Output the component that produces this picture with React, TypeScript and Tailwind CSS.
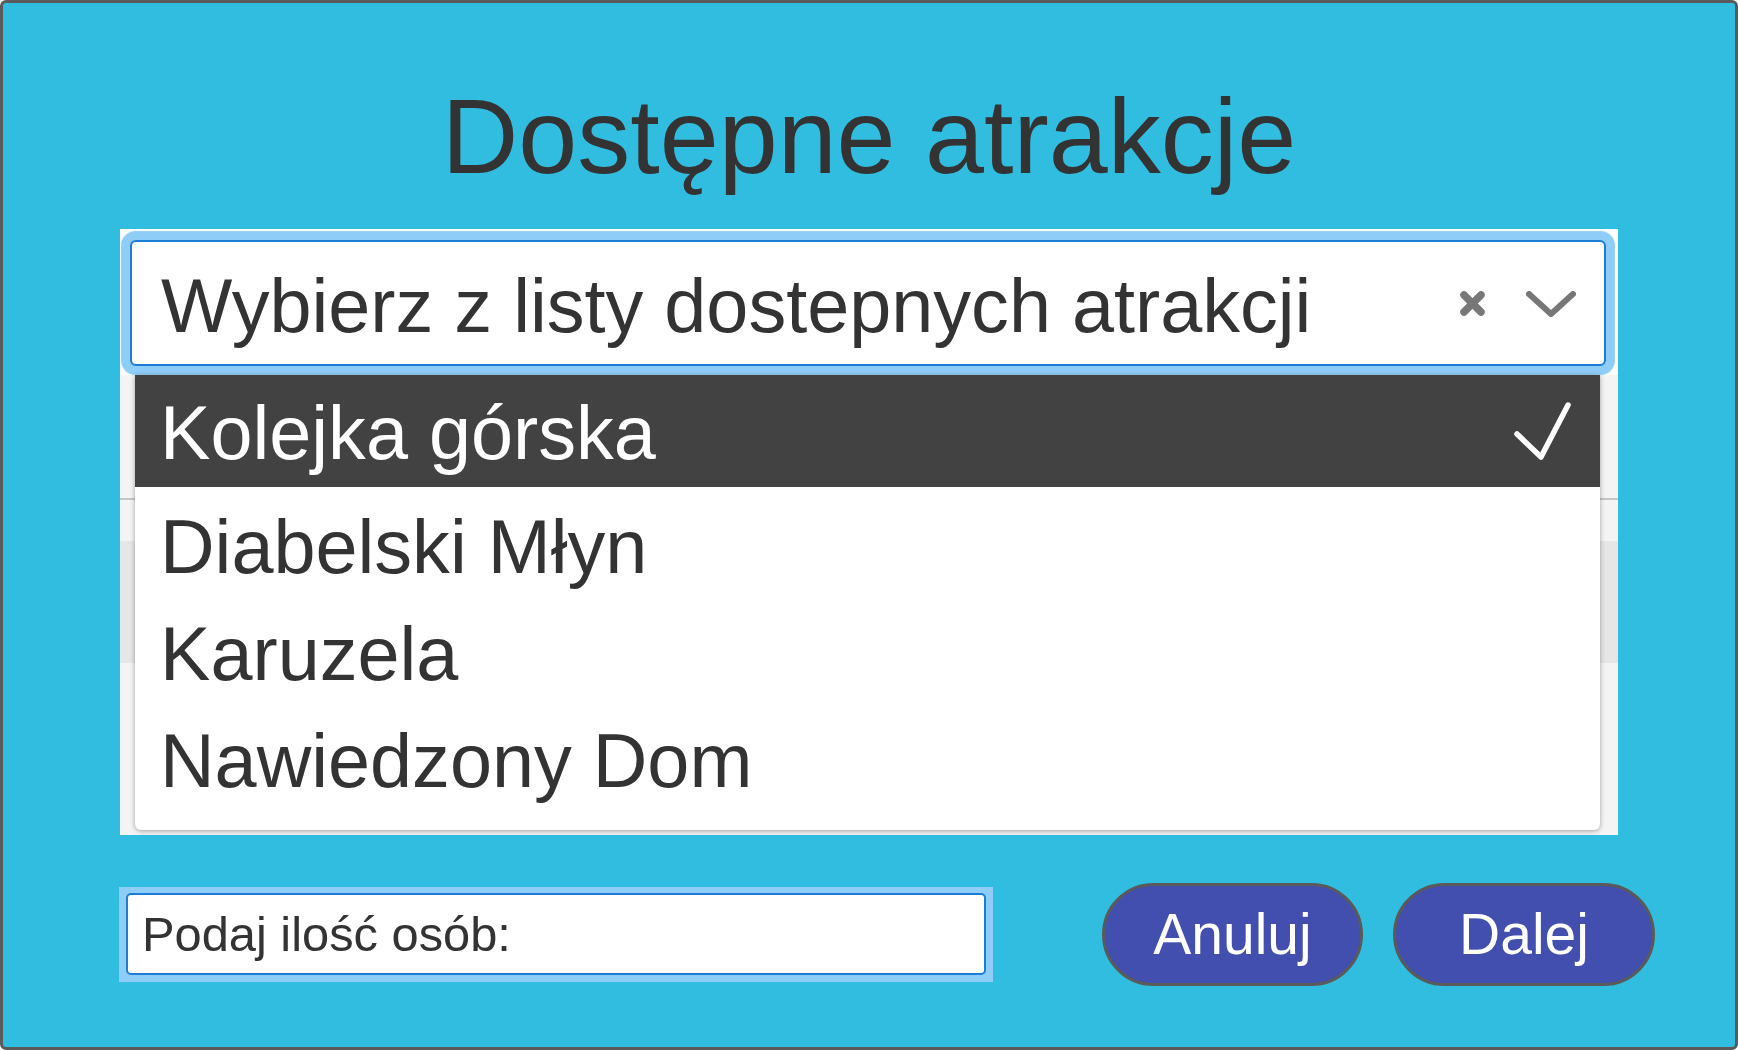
import React from "react";

function XIcon() {
  return (
    <svg width="29" height="29" viewBox="0 0 29 29" className="blur-[0.7px]">
      <path d="M6 6 L23 23 M23 6 L6 23" stroke="#777777" strokeWidth="7.5" strokeLinecap="round" fill="none" />
    </svg>
  );
}

function Chevron() {
  return (
    <svg width="52" height="29" viewBox="0 0 52 29" className="blur-[0.7px]">
      <path d="M4 5 L26 25 L48 5" stroke="#777777" strokeWidth="6" strokeLinecap="round" strokeLinejoin="round" fill="none" />
    </svg>
  );
}

function Check() {
  return (
    <svg width="60" height="60" viewBox="0 0 60 60">
      <path d="M5 33 L29 56 L56 4" stroke="#ffffff" strokeWidth="5.5" strokeLinecap="round" strokeLinejoin="round" fill="none" />
    </svg>
  );
}

export default function App() {
  const options = ["Diabelski Młyn", "Karuzela", "Nawiedzony Dom"];
  return (
    <div className="w-[1738px] h-[1050px] box-border border-[3px] border-[#5a5a5a] rounded-[6px] bg-[#31bde0] font-['Liberation_Sans',Arial,sans-serif] text-[#333333] overflow-hidden">
      <h1 className="pt-[81px] text-center text-[106px] leading-[105px] font-normal">Dostępne atrakcje</h1>

      <div className="relative ml-[117px] mt-[40px] w-[1498px] h-[606px] bg-[#f4f4f4]">
        <div className="h-[146px] bg-white pl-[10px] pt-[11px]">
          <div className="w-[1476px] h-[126px] box-border border-2 border-[#1b7dd5] rounded-[6px] bg-white shadow-[0_0_1px_9px_#8ecdf8] flex items-center pl-[29px] pr-[27px] pt-[8px]">
            <span className="flex-1 text-[75.6px] leading-none whitespace-nowrap">Wybierz z listy dostepnych atrakcji</span>
            <div className="flex items-center gap-[38px] -mt-[8px]">
              <XIcon />
              <Chevron />
            </div>
          </div>
        </div>
        <div className="h-[125px] border-b-2 border-[#c6c6c6]" />
        <div className="h-[41px]" />
        <div className="h-[122px] bg-[#e6e6e6]" />

        <div className="absolute left-[15px] top-[146px] w-[1465px] h-[455px] bg-white rounded-b-[6px] shadow-[0_1px_5px_rgba(0,0,0,0.35)]">
          <div className="h-[112px] bg-[#424242] text-white flex items-center justify-between pl-[25px] pr-[28px]">
            <span className="text-[75.6px] leading-[112px] pt-[4px]">Kolejka górska</span>
            <Check />
          </div>
          <div className="pt-[7px]">
            {options.map((o) => (
              <div key={o} className="h-[107px] pl-[25px] text-[75.6px] leading-[107px]">
                {o}
              </div>
            ))}
          </div>
        </div>
      </div>

      <div className="flex items-center mt-[48px] h-[103px]">
        <div className="ml-[116px] w-[874px] h-[95px] bg-[#8ecdf8] p-[7px] box-border">
          <div className="h-[82px] -mt-[1px] box-border border-2 border-[#1b7dd5] rounded-[5px] bg-white flex items-center pl-[14px] text-[48.8px] leading-none">
            Podaj ilość osób:
          </div>
        </div>
        <div className="ml-[109px] flex gap-[30px]">
          <button className="w-[261px] h-[103px] box-border rounded-full border-[3px] border-[#5a5a5a] bg-[#424fae] text-white text-[57px] leading-none flex items-center justify-center">
            Anuluj
          </button>
          <button className="w-[262px] h-[103px] box-border rounded-full border-[3px] border-[#5a5a5a] bg-[#424fae] text-white text-[57px] leading-none flex items-center justify-center">
            Dalej
          </button>
        </div>
      </div>
    </div>
  );
}
